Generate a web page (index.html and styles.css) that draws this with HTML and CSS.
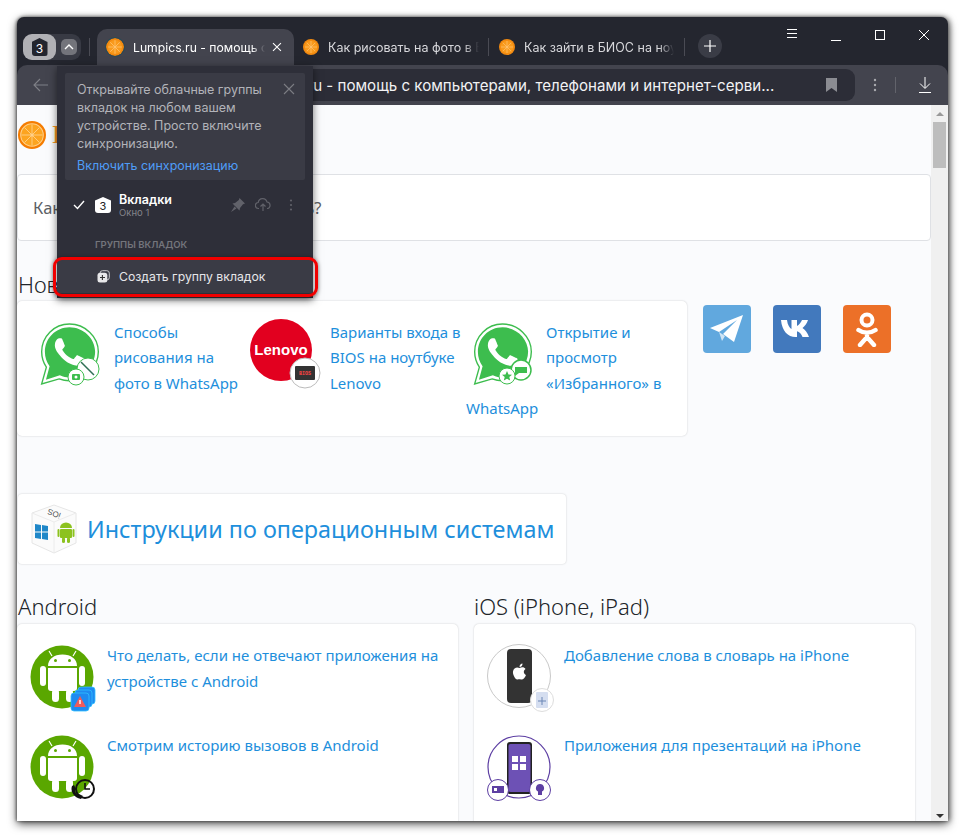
FILE: index.html
```html
<!DOCTYPE html>
<html lang="ru">
<head>
<meta charset="utf-8">
<title>Lumpics.ru</title>
<link rel="stylesheet" href="styles.css">
</head>
<body>
<svg class="defs" width="0" height="0" aria-hidden="true">
  <defs>
    <symbol id="orange" viewBox="0 0 32 32">
      <circle cx="16" cy="16" r="16" fill="#f57c00"/>
      <circle cx="16" cy="16" r="13.500" fill="#ffd08a"/>
      <circle cx="16" cy="16" r="12.300" fill="#fca420"/>
      <g stroke="#ffd08a" stroke-width="1">
        <path d="M4 16H28M16 4V28M7.500 7.500L24.500 24.500M24.500 7.500L7.500 24.500"/>
      </g>
      <circle cx="16" cy="16" r="1.800" fill="#ffd08a"/>
    </symbol>
    <symbol id="orange-sm" viewBox="0 0 32 32">
      <circle cx="16" cy="16" r="16" fill="#f28a10"/>
      <circle cx="16" cy="16" r="12.500" fill="#f99a1c"/>
      <g stroke="#ffc678" stroke-width="1.300">
        <path d="M4 16H28M16 4V28M7.500 7.500L24.500 24.500M24.500 7.500L7.500 24.500"/>
      </g>
    </symbol>
    <symbol id="wa" viewBox="2 1 55 58">
      <path d="M29 2C14.600 2 3 13.600 3 28c0 5.300 1.500 10.100 4.400 14.300L3 58l16.300-4.700C22.300 54.400 25.600 55 29 55c14.400 0 27-12.600 27-27S43.400 2 29 2z" fill="#fff" stroke="#3dbd4e" stroke-width="1.300"/>
      <path d="M29 5C16.300 5 6 15.300 6 28c0 5 1.600 9.700 4.400 13.500L7 54l13-4.100C23 51.300 26 52 29 52c12.700 0 24-11.300 24-24S41.700 5 29 5z" fill="#3dbd4e"/>
      <path transform="translate(1.500 0.500) scale(2.300)" fill="#fff" d="M17.472 14.382c-.297-.149-1.758-.867-2.03-.967-.273-.099-.471-.148-.67.15-.197.297-.767.966-.94 1.164-.173.199-.347.223-.644.075-.297-.15-1.255-.463-2.39-1.475-.883-.788-1.48-1.761-1.653-2.059-.173-.297-.018-.458.13-.606.134-.133.298-.347.446-.52.149-.174.198-.298.298-.497.099-.198.05-.371-.025-.52-.075-.149-.669-1.612-.916-2.207-.242-.579-.487-.5-.669-.51-.173-.008-.371-.01-.57-.01-.198 0-.52.074-.792.372-.272.297-1.04 1.016-1.04 2.479 0 1.462 1.065 2.875 1.213 3.074.149.198 2.096 3.2 5.077 4.487.709.306 1.262.489 1.694.625.712.227 1.36.195 1.871.118.571-.085 1.758-.719 2.006-1.413.248-.694.248-1.289.173-1.413-.074-.124-.272-.198-.57-.347z"/>
    </symbol>
    <symbol id="droid" viewBox="0 0 64 64">
      <circle cx="32" cy="32" r="31.500" fill="#5aa700"/>
      <g fill="#fff">
        <path d="M18 21C18 14 24 9.500 32.500 9.500S47 14 47 21z"/>
        <path d="M18 23H47V43a3 3 0 0 1-3 3H21a3 3 0 0 1-3-3z"/>
        <rect x="10" y="21" width="6" height="20" rx="3"/>
        <rect x="49" y="21" width="6" height="20" rx="3"/>
        <rect x="22" y="44" width="7" height="13" rx="3.500"/>
        <rect x="36" y="44" width="7" height="13" rx="3.500"/>
      </g>
      <path d="M22 11L19 6M43 11L46 6" stroke="#fff" stroke-width="1.200"/>
      <circle cx="25.500" cy="15.500" r="1.500" fill="#5aa700"/>
      <circle cx="39.500" cy="15.500" r="1.500" fill="#5aa700"/>
    </symbol>
  </defs>
</svg>

<div class="window">
  <header class="titlebar">
    <div class="group-switch">
      <div class="group-btn"><span class="hex hex-dark">3</span></div>
      <div class="chev">
        <svg width="10" height="6" viewBox="0 0 10 6"><path d="M1 5l4-4 4 4" fill="none" stroke="#fff" stroke-width="1.400"/></svg>
      </div>
    </div>
    <span class="tab-sep sep-first"></span>
    <div class="tab tab-active">
      <svg class="fav" width="18" height="18"><use href="#orange-sm"/></svg>
      <span class="tab-title">Lumpics.ru - помощь с</span>
      <svg class="tab-x" width="12" height="12" viewBox="0 0 12 12"><path d="M2 2l8 8M10 2l-8 8" stroke="#fff" stroke-width="1.100"/></svg>
    </div>
    <div class="tab tab-two">
      <svg class="fav" width="16" height="16"><use href="#orange-sm"/></svg>
      <span class="tab-title">Как рисовать на фото в В</span>
    </div>
    <span class="tab-sep"></span>
    <div class="tab tab-three">
      <svg class="fav" width="16" height="16"><use href="#orange-sm"/></svg>
      <span class="tab-title">Как зайти в БИОС на ноу</span>
    </div>
    <span class="tab-sep"></span>
    <div class="new-tab">
      <svg width="12" height="12" viewBox="0 0 12 12"><path d="M6 0v12M0 6h12" stroke="#fff" stroke-width="1.200"/></svg>
    </div>
    <div class="win-controls">
      <svg width="12" height="10" viewBox="0 0 12 10"><path d="M1 .5h10M1 4.500h10M1 8.500h10" stroke="#fff"/></svg>
      <svg width="12" height="12" viewBox="0 0 12 12" class="wc-min"><path d="M1 11.500h10" stroke="#fff"/></svg>
      <svg width="12" height="12" viewBox="0 0 12 12"><rect x="1.500" y="1.500" width="9" height="9" fill="none" stroke="#fff"/></svg>
      <svg width="12" height="12" viewBox="0 0 12 12"><path d="M1 1l10 10M11 1L1 11" stroke="#fff"/></svg>
    </div>
  </header>

  <div class="toolbar">
    <svg class="back" width="16" height="14" viewBox="0 0 16 14"><path d="M15 7H1.500M7 1L1 7l6 6" fill="none" stroke="#7f8087" stroke-width="1.100"/></svg>
    <div class="address">
      <span class="url">Lumpics.ru - помощь с компьютерами, телефонами и интернет-серви...</span>
      <svg class="bookmark" width="11" height="14" viewBox="0 0 11 14"><path d="M0 0h11v14L5.500 10 0 14z" fill="#8b8c92"/></svg>
    </div>
    <svg class="dots" width="4" height="14" viewBox="0 0 4 14"><g fill="#a9aaaf"><circle cx="2" cy="2" r="1.200"/><circle cx="2" cy="7" r="1.200"/><circle cx="2" cy="12" r="1.200"/></g></svg>
    <span class="tool-sep"></span>
    <svg class="download" width="14" height="16" viewBox="0 0 14 16"><path d="M7 0v11M2 6.500L7 11.500l5-5M1 15.500h12" fill="none" stroke="#fff" stroke-width="1"/></svg>
  </div>

  <div class="body-row">
    <main class="page">
      <div class="logo-row">
        <svg width="28" height="28"><use href="#orange"/></svg>
        <span class="logo-text">Lumpics.ru</span>
      </div>
      <div class="search">Какую проблему вы хотите решить?</div>

      <h2 class="heading heading-new">Новое на сайте: 2024</h2>
      <section class="news-row">
        <div class="news-card">
          <a class="news-item">
            <svg class="news-icon" viewBox="0 0 70 72">
              <use href="#wa" x="5" y="3" width="62" height="62"/>
              <circle cx="54" cy="49" r="11" fill="#fff" stroke="#3dbd4e"/>
              <path d="M47 42l13 13" stroke="#2f6f55" stroke-width="1.500"/>
              <circle cx="42" cy="57" r="8" fill="#fff" stroke="#3dbd4e"/>
              <rect x="38" y="54" width="8" height="6" rx="1" fill="#3dbd4e"/>
              <circle cx="42" cy="57" r="1.500" fill="#fff"/>
            </svg>
            Способы рисования на фото в WhatsApp
          </a>
          <a class="news-item">
            <svg class="news-icon" viewBox="0 0 70 72">
              <circle cx="31" cy="30" r="31" fill="#e2001f"/>
              <text x="31" y="35" class="lenovo-text">Lenovo</text>
              <circle cx="55" cy="53" r="15" fill="#fff" stroke="#bbb"/>
              <rect x="45" y="46" width="20" height="14" rx="1" fill="#333"/>
              <text x="55" y="55" class="bios-text">BIOS</text>
            </svg>
            Варианты входа в BIOS на ноутбуке Lenovo
          </a>
          <a class="news-item">
            <svg class="news-icon" viewBox="0 0 70 72">
              <use href="#wa" x="6" y="3" width="62" height="62"/>
              <circle cx="55" cy="50" r="10" fill="#fff" stroke="#3dbd4e" stroke-width="1.500"/>
              <path d="M49 47h12v6h-8l-4 3z" fill="#3dbd4e"/>
              <circle cx="41" cy="56" r="8" fill="#fff" stroke="#3dbd4e"/>
              <path d="M41 51l1.500 3.500 3.500.3-2.700 2.300.9 3.400L41 58.700 37.800 60.500l.9-3.400-2.700-2.300 3.500-.3z" fill="#3dbd4e"/>
            </svg>
            Открытие и просмотр «Избранного» в WhatsApp
          </a>
        </div>
        <div class="socials">
          <span class="social s-tg">
            <svg width="34" height="30" viewBox="0 0 34 30"><path d="M33 1L0 14l9 4L27 6 13 20v0l11 8z" fill="#fff"/><path d="M9 18l3 9 3-5z" fill="#d0e4f4"/></svg>
          </span>
          <span class="social s-vk">
            <svg width="34" height="20" viewBox="0 0 34 20"><path d="M1 1h6c.5 5 2.800 8 4.500 9V1h5.500v6c2-1 4-3.500 5-6h6c-1 3.500-3.500 6.500-5.500 8 2.500 1.500 5 4.500 6.500 9h-6.500c-1-3-3-5.200-5.500-5.800V18h-1.500C8 18 2 12 1 1z" fill="#fff"/></svg>
          </span>
          <span class="social s-ok">
            <svg width="22" height="36" viewBox="0 0 22 36"><circle cx="11" cy="9" r="5.500" fill="none" stroke="#fff" stroke-width="4"/><path d="M2.500 19c5 3.500 12 3.500 17 0M11 23v3M4 34l7-8 7 8" fill="none" stroke="#fff" stroke-width="4.400" stroke-linecap="round"/></svg>
          </span>
        </div>
      </section>

      <a class="instr-card">
        <svg class="cube" width="48" height="50" viewBox="0 0 48 50">
          <path d="M24 1L46 9V39L24 49 2 39V9z" fill="#fbfbfb" stroke="#e6e6e6"/>
          <path d="M2 9L24 18 46 9" fill="none" stroke="#ececec"/>
          <path d="M24 18V49" stroke="#ececec"/>
          <text x="0" y="0" class="cube-text" transform="translate(25 7) rotate(200)">iOS</text>
          <path d="M5 20l6 1v6.500H5zM12 21l6 1v5.500h-6zM5 28.500h6V35l-6-1zM12 28.500h6V36l-6-1z" fill="#1f87c8"/>
          <g fill="#8cc21f">
            <path d="M30 24a6 5.500 0 0 1 12 0z"/><rect x="30" y="25" width="12" height="9" rx="1"/>
            <rect x="27.500" y="25" width="2" height="8" rx="1"/><rect x="42.500" y="25" width="2" height="8" rx="1"/>
            <rect x="32" y="33" width="3" height="6" rx="1.500"/><rect x="37" y="33" width="3" height="6" rx="1.500"/>
          </g>
        </svg>
        Инструкции по операционным системам
      </a>

      <section class="os-grid">
        <div class="os-col">
          <h2 class="heading">Android</h2>
          <div class="os-card">
            <a class="os-item">
              <svg class="os-icon" viewBox="0 0 66 66">
                <use href="#droid" x="0" y="0" width="64" height="64"/>
                <g fill="#1f8af0" stroke="#30c0ff" stroke-width=".8">
                  <rect x="48" y="42" width="17" height="17" rx="3"/><rect x="45" y="45" width="17" height="17" rx="3"/><rect x="41" y="48" width="18" height="18" rx="3"/>
                </g>
                <path d="M50 51l6 11H44z" fill="#f05a5a"/>
                <path d="M50 55v4" stroke="#fff" stroke-width="1.400"/>
              </svg>
              Что делать, если не отвечают приложения на устройстве с Android
            </a>
            <a class="os-item">
              <svg class="os-icon" viewBox="0 0 66 66">
                <use href="#droid" x="0" y="0" width="64" height="64"/>
                <circle cx="55" cy="54" r="9" fill="none" stroke="#111" stroke-width="2"/>
                <path d="M55 48v6h5" fill="none" stroke="#111" stroke-width="1.600"/>
                <path d="M42 51c-2 5 2 12 9 13l2-3-4-2-1 1c-2-1-3-3-3-5l1-1-2-4z" fill="#111"/>
              </svg>
              Смотрим историю вызовов в Android
            </a>
          </div>
        </div>
        <div class="os-col">
          <h2 class="heading">iOS (iPhone, iPad)</h2>
          <div class="os-card">
            <a class="os-item">
              <svg class="os-icon" viewBox="0 0 66 66">
                <circle cx="32" cy="31" r="31.500" fill="#fff" stroke="#c9c9c9"/>
                <rect x="20" y="4" width="25" height="54" rx="4" fill="#333"/>
                <path d="M32.500 23c2-1 5-1 6 1-2.500 1.500-2 5 .5 6-1 3-3 5-5 4.500-1.500-.5-2-.5-3.500 0-2 .5-5-5-4.500-8 .5-3.500 4-5 6.500-3.500zM32.500 22c0-2 1.500-3.500 3-3.500 0 2-1 3.500-3 3.500z" fill="#fff"/>
                <circle cx="55" cy="55" r="11.500" fill="#fff" stroke="#ddd"/>
                <rect x="49" y="47" width="12" height="16" rx="1" fill="#d5def0"/>
                <path d="M55 52v8M51 56h8" stroke="#6b86b5"/>
              </svg>
              Добавление слова в словарь на iPhone
            </a>
            <a class="os-item">
              <svg class="os-icon" viewBox="0 0 66 66">
                <circle cx="32" cy="32" r="31" fill="#fff" stroke="#5d3fa3" stroke-width="1.200"/>
                <rect x="20" y="7" width="25" height="52" rx="3" fill="#222"/>
                <rect x="21.500" y="9" width="22" height="48" rx="2" fill="#6d51b5"/>
                <path d="M25 21h6v6h-6zM33 21h6v6h-6zM25 29h6v6h-6zM33 29h6v6h-6z" fill="#fff"/>
                <circle cx="11" cy="55" r="10.500" fill="#fff" stroke="#5d3fa3"/>
                <rect x="5" y="51" width="12" height="7" fill="#5d3fa3"/>
                <rect x="7" y="53" width="3" height="3" fill="#fff"/>
                <circle cx="53" cy="55" r="10.500" fill="#fff" stroke="#5d3fa3"/>
                <path d="M53 49a4 4 0 0 1 2 7.500V60h-4v-3.500A4 4 0 0 1 53 49z" fill="#5d3fa3"/>
              </svg>
              Приложения для презентаций на iPhone
            </a>
          </div>
        </div>
      </section>
    </main>
    <aside class="scrollbar">
      <span class="arrow-up"></span>
      <span class="thumb"></span>
      <span class="arrow-down"></span>
    </aside>
  </div>

  <div class="popup">
    <div class="notice">
      <svg class="notice-x" width="12" height="12" viewBox="0 0 12 12"><path d="M1 1l10 10M11 1L1 11" stroke="#7c7d84" stroke-width="1.100"/></svg>
      <p class="notice-text">Открывайте облачные группы вкладок на любом вашем устройстве. Просто включите синхронизацию.</p>
      <a class="notice-link">Включить синхронизацию</a>
    </div>
    <div class="pop-row">
      <svg class="check" width="12" height="10" viewBox="0 0 12 10"><path d="M1 5l3.500 3.500L11 1" fill="none" stroke="#fff" stroke-width="1.400"/></svg>
      <span class="hex hex-light">3</span>
      <div class="pop-names">
        <div class="pop-name">Вкладки</div>
        <div class="pop-sub">Окно 1</div>
      </div>
      <div class="pop-tools">
        <svg class="tool-pin" width="14" height="14" viewBox="0 0 14 14"><path d="M8.500 0L14 5.500l-2 .7L9 10l-.5 2.500L1.500 5.500 4 5 7.800 2z M3.500 8.500L0 14l5.500-3.500z" fill="#61626a"/></svg>
        <svg class="tool-cloud" width="16" height="14" viewBox="0 0 16 14"><path d="M4 10.500H3.500a3 3 0 0 1-.3-6A4.500 4.500 0 0 1 12 4a3.300 3.300 0 0 1 .5 6.500H12M8 13V6.500M5.500 8.500L8 6l2.500 2.500" fill="none" stroke="#61626a" stroke-width="1.200"/></svg>
        <svg width="4" height="12" viewBox="0 0 4 12"><g fill="#61626a"><circle cx="2" cy="1.500" r="1.100"/><circle cx="2" cy="6" r="1.100"/><circle cx="2" cy="10.500" r="1.100"/></g></svg>
      </div>
    </div>
    <div class="pop-label">ГРУППЫ ВКЛАДОК</div>
    <div class="pop-create">
      <svg width="13" height="13" viewBox="0 0 13 13"><rect x="3" y=".7" width="9.300" height="9.300" rx="2.500" fill="none" stroke="#c9c9cc"/><rect x=".5" y="2.700" width="9.800" height="9.800" rx="2.500" fill="#e8e8ea"/><path d="M5.400 5v5M3 7.500h5" stroke="#333" stroke-width="1.100"/></svg>
      <span>Создать группу вкладок</span>
    </div>
  </div>
  <div class="highlight"></div>
</div>
</body>
</html>
```
FILE: styles.css
```css
* { box-sizing: border-box; }
html, body { margin: 0; height: 100%; }
body {
  background: #fff;
  padding: 17px 0 0 17px;
  overflow: hidden;
  font-family: "Noto Sans", "Open Sans", sans-serif;
}
.defs { position: absolute; }
p, h2 { margin: 0; font-weight: 400; }

.window {
  position: relative;
  width: 931px;
  height: 804px;
  display: flex;
  flex-direction: column;
  background: #24262f;
  border-radius: 7px 7px 0 0;
  box-shadow: 0 3px 10px rgba(0,0,0,.65), 2px 0 5px rgba(0,0,0,.4), -1px 0 3px rgba(0,0,0,.4);
}

/* title bar */
.titlebar {
  height: 48px;
  flex: none;
  display: flex;
  align-items: flex-end;
  padding-left: 6px;
  color: #d8d8dc;
  font-family: "Inter", "Noto Sans", sans-serif;
  font-size: 12.500px;
}
.group-switch {
  width: 58px;
  height: 26px;
  margin-bottom: 5px;
  display: flex;
  align-items: center;
  background: #383a44;
  border-radius: 9px;
}
.group-btn {
  width: 33px;
  height: 26px;
  background: #b1b1b5;
  border-radius: 9px;
  display: flex;
  align-items: center;
  justify-content: center;
}
.chev {
  width: 16px;
  height: 16px;
  margin-left: 5px;
  background: #73747b;
  border-radius: 5px;
  display: flex;
  align-items: center;
  justify-content: center;
}
.hex {
  width: 16px;
  height: 16px;
  display: flex;
  align-items: center;
  justify-content: center;
  font-size: 11px;
  line-height: 1;
  padding-top: 3px;
  clip-path: polygon(50% 0, 100% 22%, 100% 100%, 0 100%, 0 22%);
  border-radius: 3px;
}
.hex-dark { background: #23252e; color: #fff; height: 18px; font-size: 12px; }
.hex-light { background: #fff; color: #222; }
.tab-sep {
  width: 1px;
  height: 18px;
  margin: 0 0 9px 0;
  background: #4a4b54;
  flex: none;
}
.sep-first { margin-left: 8px; margin-right: 7px; }
.tab {
  height: 36px;
  display: flex;
  align-items: center;
  flex: none;
  position: relative;
}
.tab-title {
  white-space: nowrap;
  overflow: hidden;
  -webkit-mask-image: linear-gradient(90deg, #000 90%, transparent 100%);
  mask-image: linear-gradient(90deg, #000 90%, transparent 100%);
}
.tab-active {
  width: 197px;
  padding: 0 11px 0 9px;
  background: #43444e;
  border-radius: 10px 10px 0 0;
  color: #fff;
}
.tab-active .fav { border-radius: 50%; box-shadow: 0 0 0 1px #2b4a55; }
.tab-active .tab-title { width: 133px; margin: 0 6px 0 9px; font-size: 12.200px; }
.tab-two { width: 194px; padding-left: 9px; }
.tab-two .tab-title { width: 151px; margin-left: 9px; }
.tab-three { width: 195px; padding-left: 10px; }
.tab-three .tab-title { width: 150px; margin-left: 9px; }
.fav { flex: none; }
.new-tab {
  width: 24px;
  height: 24px;
  margin: 0 0 7px 13px;
  background: #3a3c46;
  border-radius: 50%;
  display: flex;
  align-items: center;
  justify-content: center;
  flex: none;
}
.win-controls {
  margin-left: auto;
  align-self: flex-start;
  display: flex;
  gap: 32px;
  padding: 12px 18px 0 0;
}
.win-controls svg { display: block; }

/* toolbar */
.toolbar {
  height: 40px;
  flex: none;
  display: flex;
  align-items: center;
  padding: 0 17px 0 16px;
  background: #43444e;
  border-radius: 10px 10px 0 0;
}
.back { flex: none; }
.address {
  margin-left: 11px;
  width: 795px;
  height: 32px;
  display: flex;
  align-items: center;
  justify-content: space-between;
  padding: 0 18px 0 0;
  background: #2c2d37;
  border-radius: 9px;
  flex: none;
}
.url {
  font-family: "Inter", "Noto Sans", sans-serif;
  font-size: 15.100px;
  color: #f2f2f4;
  white-space: nowrap;
  margin-left: 183px;
}
.bookmark { flex: none; }
.dots { margin-left: 18px; flex: none; }
.tool-sep { width: 1px; height: 16px; background: #62636b; margin: 0 22px 0 18px; flex: none; }
.download { flex: none; }

/* page */
.body-row {
  flex: 1;
  min-height: 0;
  display: flex;
}
.page {
  flex: 1;
  min-width: 0;
  overflow: hidden;
  background: #fafbfd;
  padding: 15px 17px 0 0;
  color: #212529;
}
.scrollbar {
  width: 17px;
  flex: none;
  display: flex;
  flex-direction: column;
  align-items: center;
  background: #f0f0f0;
  padding-top: 7px;
}
.arrow-up, .arrow-down { width: 0; height: 0; border-left: 4px solid transparent; border-right: 4px solid transparent; }
.arrow-up { border-bottom: 4px solid #999; }
.thumb { width: 13px; height: 46px; background: #bdbdbd; margin-top: 6px; }
.arrow-down { border-top: 4px solid #333; margin-top: auto; margin-bottom: 3px; }

.logo-row { height: 30px; display: flex; align-items: center; gap: 6px; padding-left: 1px; }
.logo-text { color: #f7931e; font: 26px "Liberation Serif", serif; }
.search {
  margin-top: 24px;
  height: 67px;
  background: #fff;
  border: 1px solid #dfe1e5;
  border-radius: 4px;
  padding-left: 15px;
  display: flex;
  align-items: center;
  font-size: 16.500px;
  color: #5c5f66;
  width: 914px;
}
.heading {
  font-size: 22px;
  font-weight: 300;
  line-height: 30px;
  color: #212529;
  padding-left: 1px;
}
.heading-new { margin: 28px 0 2px; }
.news-row { display: flex; }
.news-card {
  width: 670px;
  height: 135px;
  background: #fff;
  border-radius: 5px;
  box-shadow: 0 0 2px rgba(0,0,0,.2);
  padding: 19px 0 0 17px;
  display: grid;
  grid-template-columns: 216px 216px 216px;
}
.news-item {
  display: block;
  font-size: 15px;
  line-height: 25.300px;
  color: #1e8fdc;
}
.news-icon { float: left; width: 70px; height: 72px; margin-right: 10px; overflow: visible; }
.lenovo-text { font: 700 15px "Liberation Sans", sans-serif; fill: #fff; text-anchor: middle; }
.bios-text { font: 700 5px "Liberation Mono", monospace; fill: #f44; text-anchor: middle; }
.socials { display: flex; gap: 22px; margin: 4px 0 0 16px; }
.social {
  width: 48px;
  height: 48px;
  border-radius: 4px;
  display: flex;
  align-items: center;
  justify-content: center;
}
.s-tg { background: #61a8de; }
.s-vk { background: #4279bd; }
.s-ok { background: #ec7028; }

.instr-card {
  margin: 58px 0 0 1px;
  width: 548px;
  height: 70px;
  background: #fff;
  border-radius: 4px;
  box-shadow: 0 0 2px rgba(0,0,0,.2);
  display: flex;
  align-items: center;
  gap: 9px;
  padding-left: 12px;
  font-size: 23.400px;
  color: #1e8fdc;
  white-space: nowrap;
}
.cube { flex: none; }
.cube-text { font: 8px "Liberation Sans", sans-serif; fill: #555; text-anchor: middle; }

.os-grid { display: flex; gap: 16px; margin-top: 27px; }
.os-col { width: 441px; flex: none; }
.os-col + .os-col .heading { padding-left: 0; }
.os-card {
  margin-top: 3px;
  height: 300px;
  background: #fff;
  border-radius: 5px;
  box-shadow: 0 0 2px rgba(0,0,0,.2);
  padding: 18px 14px 0 13px;
}
.os-item {
  display: block;
  height: 90px;
  font-size: 15px;
  line-height: 26px;
  color: #1e8fdc;
}
.os-icon { float: left; width: 66px; height: 66px; margin-right: 11px; margin-top: 3px; overflow: visible; }

/* popup */
.popup {
  position: absolute;
  left: 40px;
  top: 49px;
  width: 256px;
  height: 232px;
  background: #2e2f39;
  box-shadow: 0 2px 8px rgba(0,0,0,.55);
  padding: 7px 8px 0;
  font-family: "Inter", "Noto Sans", sans-serif;
  color: #fff;
}
.notice {
  position: relative;
  height: 107px;
  background: #3a3b45;
  border-radius: 2px;
  padding: 8px 12px 0;
  font-size: 12.500px;
  line-height: 18px;
  color: #b2b3b9;
}
.notice-x { position: absolute; right: 10px; top: 10px; }
.notice-text { width: 200px; }
.notice-link { display: block; margin-top: 4px; color: #4f9df7; }
.pop-row {
  position: relative;
  height: 42px;
  margin-top: 4px;
  display: flex;
  align-items: center;
  padding-left: 8px;
}
.check { flex: none; }
.pop-row .hex { margin-left: 10px; flex: none; }
.pop-names { margin-left: 8px; }
.pop-name { font-size: 12.500px; font-weight: 600; line-height: 15px; }
.pop-sub { font-size: 9.500px; line-height: 12px; color: #83848b; }
.pop-tools { margin-left: auto; display: flex; align-items: center; padding-right: 12px; }
.tool-pin { margin-right: 10px; }
.tool-cloud { margin-right: 18px; }
.pop-label {
  margin-top: 13px;
  padding-left: 30px;
  font-size: 9.500px;
  font-weight: 600;
  color: #74757c;
  line-height: 12px;
}
.pop-create {
  margin: 8px -8px 0;
  height: 34px;
  padding-left: 40px;
  display: flex;
  align-items: center;
  gap: 9px;
  background: #3a3b45;
  font-size: 12.250px;
  color: #e6e6e9;
}
.highlight {
  position: absolute;
  left: 36px;
  top: 240px;
  width: 265px;
  height: 40px;
  border: 3px solid #f00000;
  border-radius: 9px;
  box-shadow: 0 1px 4px rgba(0,0,0,.5);
}
```
